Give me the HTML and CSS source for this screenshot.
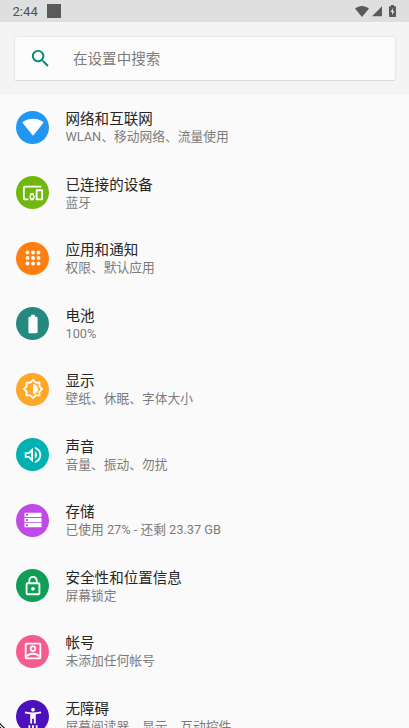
FILE: index.html
```html
<!DOCTYPE html>
<html lang="zh-CN">
<head>
<meta charset="utf-8">
<title>设置</title>
<link rel="stylesheet" href="styles.css">
</head>
<body>
<div class="screen">
  <header class="status">
    <span class="clock">2:44</span>
    <span class="notice"></span>
    <div class="indicators">
      <svg class="wifi" viewBox="0 0 14 11"><path d="M0 2.600C4-.8 10-.8 14 2.600L7 11z"/></svg>
      <svg class="signal" viewBox="0 0 10 10"><path d="M0 10L10 0V10z"/></svg>
      <svg class="charge" viewBox="0 0 7 12"><path fill-rule="evenodd" d="M2 0h3v1.200h1.300q.7 0 .7.700V11.300q0 .7-.7.700H.7Q0 12 0 11.300V1.900q0-.7.700-.7H2zM4 3L1.500 7H3v3l2.500-4H4z"/></svg>
    </div>
  </header>
  <div class="search-area">
    <div class="search">
      <svg class="search-icon" viewBox="0 0 24 24"><path d="M15.500 14h-.79l-.28-.27A6.471 6.471 0 0 0 16 9.500 6.500 6.500 0 1 0 9.500 16c1.610 0 3.090-.59 4.230-1.570l.27.28v.79l5 4.990L20.490 19l-4.990-5zm-6 0C7.010 14 5 11.990 5 9.500S7.010 5 9.500 5 14 7.010 14 9.500 11.990 14 9.500 14z"/></svg>
      <span class="hint">在设置中搜索</span>
    </div>
  </div>
  <main class="list">
    <div class="row">
      <div class="icon blue"><svg viewBox="0 0 24 24"><path d="M12.010 21.490L23.640 7c-.45-.34-4.930-4-11.640-4C5.280 3 .81 6.660.36 7l11.630 14.490.01.010.01-.010z"/></svg></div>
      <div class="text"><div class="title">网络和互联网</div><div class="sub">WLAN、移动网络、流量使用</div></div>
    </div>
    <div class="row">
      <div class="icon green"><svg viewBox="0 0 24 24"><path d="M3 6h18V4H3c-1.100 0-2 .9-2 2v12c0 1.100.9 2 2 2h4v-2H3V6zm10 6H9v1.780c-.61.55-1 1.330-1 2.220s.39 1.670 1 2.220V20h4v-1.780c.61-.55 1-1.340 1-2.220s-.39-1.670-1-2.220V12zm-2 5.500c-.83 0-1.500-.67-1.500-1.500s.67-1.500 1.500-1.500 1.500.67 1.500 1.500-.67 1.500-1.500 1.500zM22 8h-6c-.5 0-1 .5-1 1v10c0 .5.500 1 1 1h6c.5 0 1-.5 1-1V9c0-.5-.5-1-1-1zm-1 10h-4v-8h4v8z"/></svg></div>
      <div class="text"><div class="title">已连接的设备</div><div class="sub">蓝牙</div></div>
    </div>
    <div class="row">
      <div class="icon orange"><svg viewBox="0 0 24 24"><circle cx="6" cy="6" r="2.100"/><circle cx="12" cy="6" r="2.100"/><circle cx="18" cy="6" r="2.100"/><circle cx="6" cy="12" r="2.100"/><circle cx="12" cy="12" r="2.100"/><circle cx="18" cy="12" r="2.100"/><circle cx="6" cy="18" r="2.100"/><circle cx="12" cy="18" r="2.100"/><circle cx="18" cy="18" r="2.100"/></svg></div>
      <div class="text"><div class="title">应用和通知</div><div class="sub">权限、默认应用</div></div>
    </div>
    <div class="row">
      <div class="icon teal"><svg viewBox="0 0 24 24"><path d="M15.670 4H14V2h-4v2H8.330C7.600 4 7 4.600 7 5.330v15.330C7 21.400 7.600 22 8.330 22h7.330c.74 0 1.340-.6 1.340-1.330V5.330C17 4.600 16.400 4 15.670 4z"/></svg></div>
      <div class="text"><div class="title">电池</div><div class="sub">100%</div></div>
    </div>
    <div class="row">
      <div class="icon amber"><svg viewBox="0 0 24 24"><path d="M20 15.310L23.310 12 20 8.690V4h-4.690L12 .69 8.690 4H4v4.690L.69 12 4 15.310V20h4.690L12 23.310 15.310 20H20zM18 14.480V18h-3.520L12 20.480 9.520 18H6v-3.520L3.520 12 6 9.520V6h3.520L12 3.520 14.480 6H18v3.520L20.480 12zM12 6.500v11c3.030 0 5.500-2.470 5.500-5.500S15.030 6.500 12 6.500z" fill-rule="evenodd"/></svg></div>
      <div class="text"><div class="title">显示</div><div class="sub">壁纸、休眠、字体大小</div></div>
    </div>
    <div class="row">
      <div class="icon cyan"><svg viewBox="0 0 24 24"><path d="M3 9v6h4l5 5V4L7 9H3zm7-.17v6.340L7.830 13H5v-2h2.830L10 8.830zM16.500 12A4.500 4.500 0 0 0 14 7.970v8.050A4.470 4.470 0 0 0 16.500 12zM14 3.230v2.060c2.890.86 5 3.540 5 6.710s-2.110 5.850-5 6.710v2.060c4.010-.91 7-4.490 7-8.770s-2.990-7.860-7-8.770z"/></svg></div>
      <div class="text"><div class="title">声音</div><div class="sub">音量、振动、勿扰</div></div>
    </div>
    <div class="row">
      <div class="icon purple"><svg viewBox="0 0 24 24"><path d="M2.700 20h18.600v-4.700H2.700V20zM4.500 16.700h2v2h-2v-2zM2.700 4v4.700h18.600V4H2.700zM6.500 7.300h-2v-2h2v2zm-3.800 7.100h18.600V9.700H2.700v4.700zM4.500 11h2v2h-2v-2z" fill-rule="evenodd"/></svg></div>
      <div class="text"><div class="title">存储</div><div class="sub">已使用 27% - 还剩 23.37 GB</div></div>
    </div>
    <div class="row">
      <div class="icon emerald"><svg viewBox="0 0 24 24"><path d="M12 17c1.100 0 2-.9 2-2s-.9-2-2-2-2 .9-2 2 .9 2 2 2zm6-9h-1V6c0-2.760-2.240-5-5-5S7 3.240 7 6v2H6c-1.100 0-2 .9-2 2v10c0 1.100.9 2 2 2h12c1.100 0 2-.9 2-2V10c0-1.100-.9-2-2-2zM8.900 6c0-1.710 1.390-3.100 3.100-3.100s3.100 1.390 3.100 3.100v2H8.900V6zM18 20H6V10h12v10z"/></svg></div>
      <div class="text"><div class="title">安全性和位置信息</div><div class="sub">屏幕锁定</div></div>
    </div>
    <div class="row">
      <div class="icon pink"><svg class="outline" viewBox="0 0 24 24"><rect x="4" y="4" width="16" height="16" rx="1"/><circle cx="12" cy="9.500" r="2.500"/><path d="M5 18c2-2.200 4.500-3 7-3s5 .8 7 3"/></svg></div>
      <div class="text"><div class="title">帐号</div><div class="sub">未添加任何帐号</div></div>
    </div>
    <div class="row">
      <div class="icon indigo"><svg viewBox="0 0 24 24"><path d="M20.500 6c-2.610.7-5.670 1-8.500 1s-5.890-.3-8.500-1L3 8c1.860.5 4 .83 6 1v10h2v-5h2v5h2V9c2-.17 4.140-.5 6-1l-.5-2zM12 6c1.100 0 2-.9 2-2s-.9-2-2-2-2 .9-2 2 .9 2 2 2zM7 24h2v-3H7v3zm4 0h2v-3h-2v3zm4 0h2v-3h-2v3z"/></svg></div>
      <div class="text"><div class="title">无障碍</div><div class="sub">屏幕阅读器、显示、互动控件</div></div>
    </div>
  </main>
  <svg class="corner" viewBox="0 0 5 5"><path d="M0 0L5 5H3.500L0 1.500zM0 3.500L1.500 5H0z"/></svg>
</div>
</body>
</html>
```
FILE: styles.css
```css
* { box-sizing: border-box; }
body { margin: 0; }
.screen {
  position: relative;
  height: 728px;
  overflow: hidden;
  background: #fafafa;
  font-family: Roboto, "Noto Sans CJK SC", sans-serif;
}
svg { display: block; }
.status {
  display: flex;
  align-items: center;
  height: 22px;
  padding: 0 13px 0 12.500px;
  background: #dfdfdf;
  color: #505050;
}
.clock { width: 34.500px; font-size: 13.100px; font-weight: 400; line-height: 22px; padding-top: 1px; }
.notice { width: 14px; height: 14px; background: #5a5a5a; }
.indicators { display: flex; align-items: flex-end; margin-left: auto; height: 12px; margin-bottom: 1px; fill: #5a5a5a; }
.wifi { width: 14px; height: 11px; margin-right: 3px; }
.signal { width: 10px; height: 10.500px; margin-right: 7px; }
.charge { width: 7px; height: 12px; }
.search-area { height: 72.700px; padding: 14.500px 14.500px 0; background: #f4f4f4; }
.search {
  display: flex;
  align-items: center;
  height: 43.500px;
  padding-left: 14px;
  background: #fbfbfb;
  border-radius: 1px;
  box-shadow: 0 0 2px rgba(0, 0, 0, .18), 0 1px 1px rgba(0, 0, 0, .07);
  color: #7c7c7c;
  font-size: 14.550px;
}
.hint { padding-bottom: 2px; }
.search-icon { width: 23px; height: 23px; margin-right: 21.500px; fill: #008577; }
.row { display: flex; align-items: center; height: 65.500px; padding-left: 16px; }
.icon {
  display: flex;
  flex: none;
  align-items: center;
  justify-content: center;
  width: 33px;
  height: 33px;
  margin-right: 16.500px;
  border-radius: 50%;
}
.icon svg { width: 22px; height: 22px; fill: #fff; }
.icon .outline { fill: none; stroke: #fff; stroke-width: 2; }
.blue { background: #2196f3; }
.green { background: #70b80e; }
.orange { background: #ff7e0f; }
.teal { background: #248a80; }
.amber { background: #ffa726; }
.cyan { background: #00b1b2; }
.purple { background: #bf4ae5; }
.emerald { background: #0f9d58; }
.pink { background: #f45b8f; }
.indigo { background: #4d10bd; }
.text { padding-top: 1.400px; white-space: nowrap; }
.title { font-size: 14.550px; line-height: 18px; color: #252525; }
.sub { font-size: 12.750px; line-height: 16px; color: #7c7c7c; }
.corner { position: absolute; left: 0; bottom: 0; width: 5px; height: 5px; }
```
